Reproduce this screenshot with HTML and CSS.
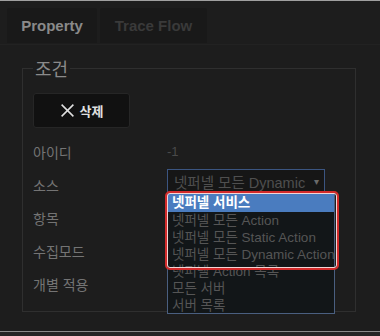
FILE: index.html
```html
<!DOCTYPE html>
<html lang="ko">
<head>
<meta charset="utf-8">
<link rel="stylesheet" href="styles.css">
</head>
<body>
<div class="frame">
  <div class="tabs">
    <div class="tab tab-active">Property</div>
    <div class="tab tab-idle">Trace Flow</div>
  </div>
  <fieldset class="group">
    <legend class="legend">조건</legend>
    <button class="btn-delete" type="button">
      <svg class="x-icon" width="14" height="14" viewBox="0 0 14 14"><path d="M1.5 1.5 L12.5 12.5 M12.5 1.5 L1.5 12.5" stroke="#e0e0e0" stroke-width="1.4" fill="none"/></svg>
      <span>삭제</span>
    </button>
    <div class="rows">
      <div class="label">아이디</div>
      <div class="value"><span class="id-val">-1</span></div>
      <div class="label">소스</div>
      <div class="value">
        <div class="select-wrap">
          <div class="select">
            <span class="select-text">넷퍼넬 모든 Dynamic</span>
            <span class="arrow">▾</span>
          </div>
          <div class="dropdown">
            <div class="opt opt-sel">넷퍼넬 서비스</div>
            <div class="opt">넷퍼넬 모든 Action</div>
            <div class="opt">넷퍼넬 모든 Static Action</div>
            <div class="opt">넷퍼넬 모든 Dynamic Action</div>
            <div class="opt">넷퍼넬 Action 목록</div>
            <div class="opt">모든 서버</div>
            <div class="opt">서버 목록</div>
            <div class="highlight"></div>
          </div>
        </div>
      </div>
      <div class="label">항목</div>
      <div class="value"></div>
      <div class="label">수집모드</div>
      <div class="value"></div>
      <div class="label">개별 적용</div>
      <div class="value"></div>
    </div>
  </fieldset>
</div>
<div class="foot"></div>
</body>
</html>
```

FILE: styles.css
```css
html, body {
  margin: 0;
  padding: 0;
  background: #242424;
  font-family: "Liberation Sans", "Noto Sans CJK KR", sans-serif;
}
.frame {
  box-sizing: border-box;
  width: 380px;
  height: 332px;
  background: #1d1d1d;
  border-top: 1px solid #a0a0a0;
  border-bottom: 1px solid #8a8a8a;
  overflow: hidden;
}
.tabs {
  display: flex;
  gap: 3px;
  padding: 7px 0 0 7px;
  height: 36px;
  border-bottom: 1px solid #222;
  box-sizing: content-box;
}
.tab {
  height: 35px;
  display: flex;
  align-items: center;
  justify-content: center;
  font-weight: bold;
  font-size: 15px;
  background: #191919;
  border-radius: 2px 2px 0 0;
}
.tab-active {
  width: 90px;
  color: #8a8a8a;
}
.tab-idle {
  width: 107px;
  color: #3a3a3a;
}
.group {
  box-sizing: border-box;
  width: 334px;
  margin: 12px 0 0 22px;
  padding: 14px 10px 10px 10px;
  border: 1px solid #2f2f2f;
}
.legend {
  padding: 0 2px;
  margin-left: 0;
  font-family: "Noto Sans CJK KR", sans-serif;
  font-size: 18px;
  line-height: 22px;
  color: #8a8a8a;
}
.btn-delete {
  display: flex;
  align-items: center;
  justify-content: center;
  gap: 5px;
  width: 97px;
  height: 35px;
  margin: 0;
  padding: 0;
  background: #111;
  border: 1px solid #262626;
  border-radius: 3px;
  color: #e0e0e0;
  font-family: "Noto Sans CJK KR", sans-serif;
  font-weight: bold;
  font-size: 13px;
}
.x-icon {
  width: 15px;
  height: 15px;
}
.rows {
  display: grid;
  grid-template-columns: 134px 1fr;
  grid-auto-rows: 33px;
  margin-top: 8px;
}
.label {
  font-family: "Noto Sans CJK KR", sans-serif;
  font-size: 14px;
  line-height: 33px;
  color: #747474;
}
.value {
  position: relative;
}
.id-val {
  display: block;
  line-height: 31px;
  font-size: 13px;
  color: #4a4a4a;
}
.select-wrap {
  position: relative;
}
.select {
  box-sizing: border-box;
  width: 158px;
  height: 25px;
  border: 1px solid #3b5581;
  background: #161616;
  display: flex;
  align-items: center;
  justify-content: space-between;
  padding: 0 5px 0 6px;
  overflow: hidden;
}
.select-text {
  white-space: nowrap;
  font-size: 14.5px;
  color: #4f4f4f;
}
.arrow {
  flex: 0 0 auto;
  font-size: 10px;
  color: #6a6a6a;
}
.dropdown {
  position: absolute;
  left: 0;
  top: 24px;
  box-sizing: border-box;
  width: 168px;
  height: 121px;
  background: #121618;
  border: 1px solid #4a5f80;
  padding: 0;
}
.opt {
  height: 17px;
  line-height: 17px;
  padding-left: 4px;
  font-size: 13.5px;
  color: #555;
  white-space: nowrap;
  overflow: hidden;
}
.opt-sel {
  height: 18px;
  line-height: 18px;
  background: #4a7cbf;
  color: #fff;
  font-weight: bold;
}
.highlight {
  position: absolute;
  left: -3px;
  top: -3px;
  width: 170px;
  height: 75px;
  border: 2px solid #d22a2a;
  border-radius: 5px;
  box-shadow: inset 0 0 0 1px #f2d6d6;
}
.foot {
  height: 4px;
  background: #252525;
}
```
